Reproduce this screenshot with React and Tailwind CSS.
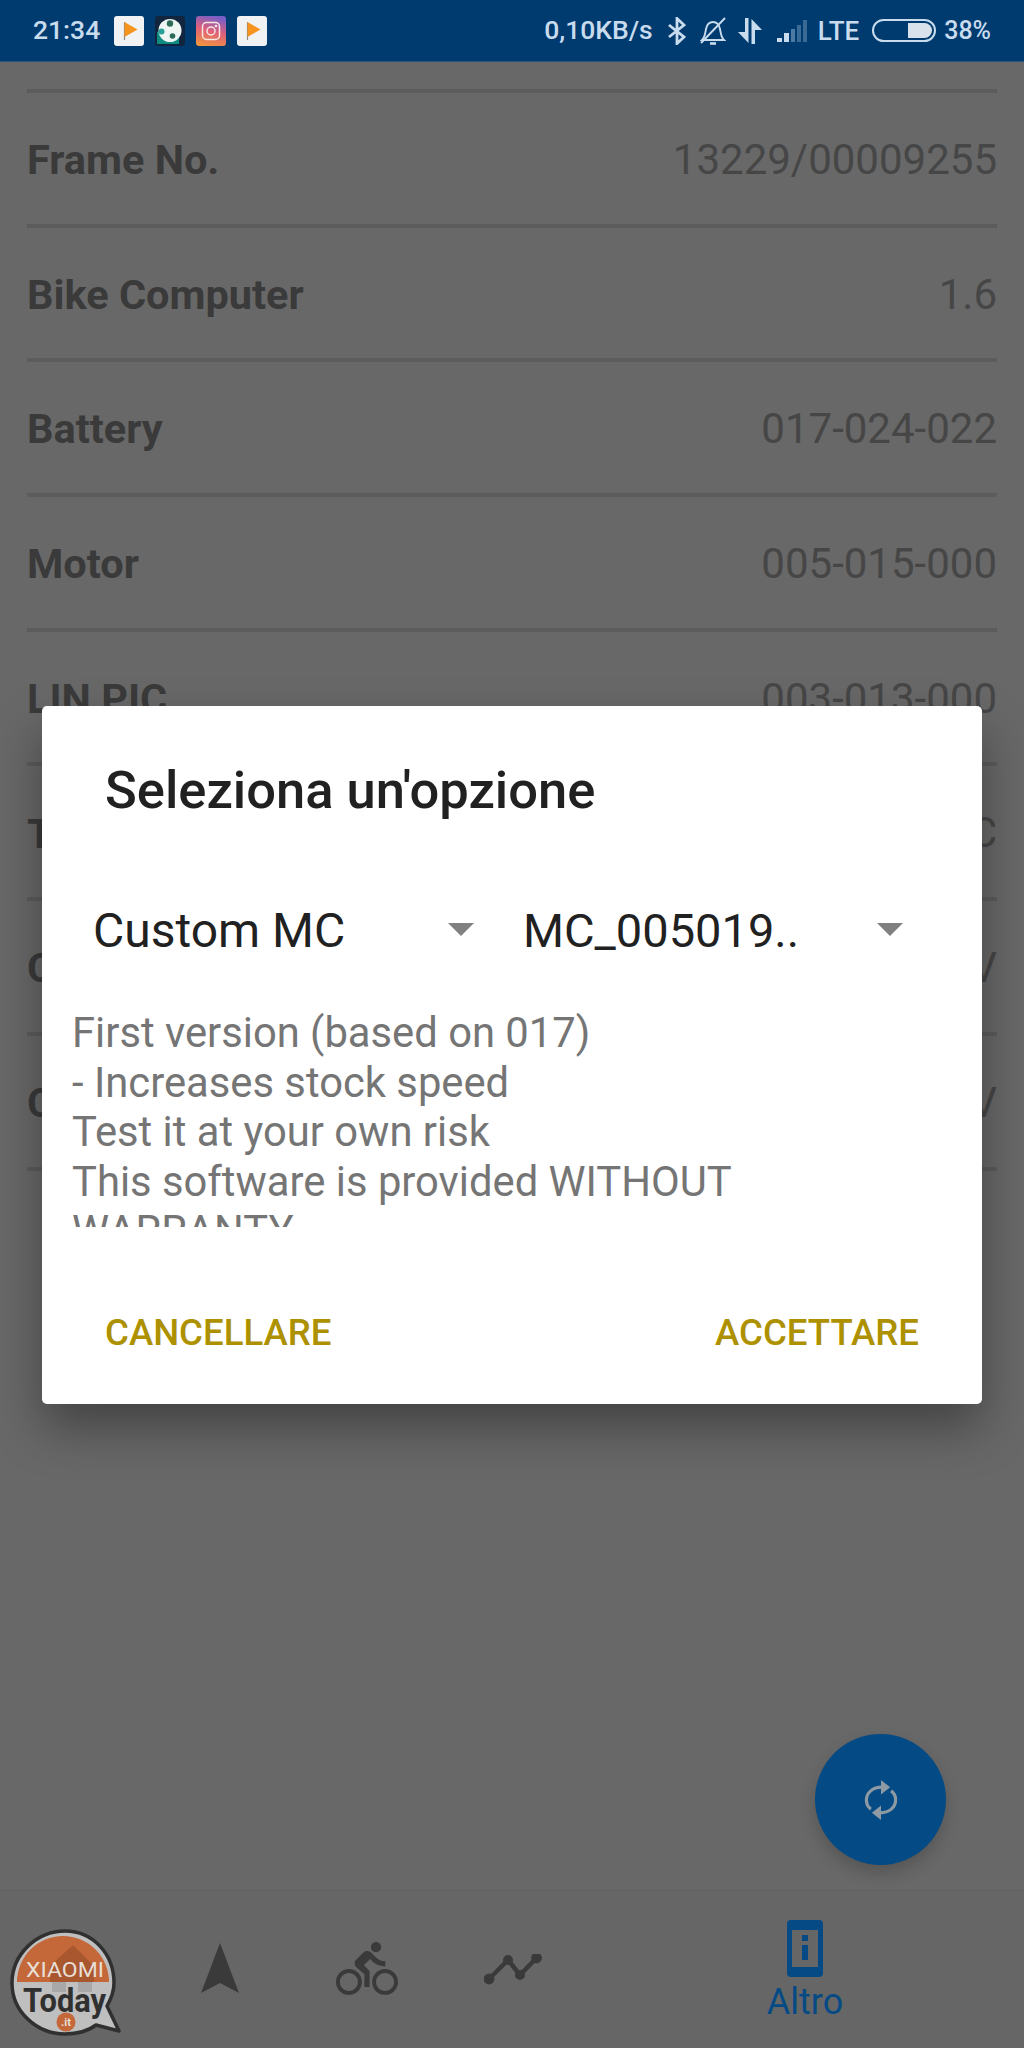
import React from "react";

const rows = [
  ["Frame No.", "13229/00009255"],
  ["Bike Computer", "1.6"],
  ["Battery", "017-024-022"],
  ["Motor", "005-015-000"],
  ["LIN PIC", "003-013-000"],
  ["Tipo", "MC"],
  ["Charger", "36V"],
  ["Cell", "36V"],
];

function Flag() {
  return (
    <div className="w-[30px] h-[30px] rounded-[3px] bg-[#f1f2f4]">
      <svg width="30" height="30" viewBox="0 0 30 30">
        <path d="M10.5 6v18" stroke="#8a8a80" strokeWidth="1.2" />
        <path d="M10.5 6l13 7.5-13 7.5z" fill="#f7941e" />
      </svg>
    </div>
  );
}

function Soccer() {
  return (
    <svg width="30" height="30" viewBox="0 0 30 30">
      <rect width="30" height="30" rx="3" fill="#12253f" />
      <rect x="2" y="16" width="22" height="12" fill="#0f8a80" />
      <circle cx="15" cy="14.5" r="11.5" fill="#eef5f2" />
      <circle cx="15" cy="7.5" r="3.2" fill="#2c6b5a" />
      <circle cx="6.5" cy="15.5" r="3" fill="#2aa198" />
      <circle cx="17.5" cy="20" r="2.8" fill="#2c6b5a" />
    </svg>
  );
}

function Instagram() {
  return (
    <div className="w-[30px] h-[30px] rounded-[3px] bg-[linear-gradient(15deg,#f29a36_0%,#e0607a_50%,#7a5fc6_90%)] flex items-center justify-center">
      <svg width="20" height="20" viewBox="0 0 20 20" fill="none" stroke="#f6e8e4" strokeWidth="1.5">
        <rect x="1.5" y="1.5" width="17" height="17" rx="4" />
        <circle cx="10" cy="10" r="4" />
        <circle cx="15" cy="5" r="0.6" fill="#f6e8e4" />
      </svg>
    </div>
  );
}

function StatusRight() {
  const c = "#c9dcee";
  return (
    <div className="flex items-center text-[#c9dcee] font-medium leading-none">
      <span className="text-[26.5px]">0,10KB/s</span>
      <svg className="ml-[15px]" width="18" height="28" viewBox="0 0 18 28" fill="none" stroke={c} strokeWidth="2.8">
        <path d="M1 8l15 12-7 6.5V1.5l7 6.5L1 20" />
      </svg>
      <svg className="ml-[14px]" width="26" height="28" viewBox="0 0 26 28" fill="none" stroke={c} strokeWidth="1.9">
        <path d="M2 23c3-2.500 3-6 4-11 1-5 3-7 7-7 4 0 6 2 7 7 1 5 1 8.500 4 11z" />
        <path d="M10 26.500h6" strokeWidth="2.6" />
        <path d="M1 26L25 1" />
      </svg>
      <svg className="ml-[12px]" width="24" height="26" viewBox="0 0 24 26" fill={c}>
        <path d="M7 0h3.500v25L0 14h7z" />
        <path d="M13.500 26V1L24 12h-7v14z" />
      </svg>
      <svg className="ml-[14px]" width="32" height="22" viewBox="0 0 32 22">
        <rect x="1" y="18" width="5" height="4" fill={c} />
        <rect x="8" y="13" width="5" height="9" fill={c} />
        <rect x="15" y="9" width="4" height="13" fill="#4c7aa3" />
        <rect x="21" y="5" width="4" height="17" fill="#3a6b96" />
        <rect x="27" y="0" width="4" height="22" fill="#3a6b96" />
      </svg>
      <span className="ml-[10px] text-[26px]">LTE</span>
      <div className="ml-[13px] w-[64px] h-[23px] rounded-full border-2 border-[#c9dcee] p-[2px] flex justify-end">
        <div className="w-[24px] h-full bg-[#d9e2ea] rounded-r-full" />
      </div>
      <span className="ml-[8px] text-[25px]">38%</span>
    </div>
  );
}

function NavIcons() {
  const c = "#3a3a3a";
  return (
    <>
      <svg className="ml-[201px] mt-[52px] shrink-0" width="38" height="50" viewBox="0 0 38 50">
        <path d="M19 0L38 50 19 40 0 50z" fill={c} />
      </svg>
      <svg className="ml-[97px] mt-[47px] shrink-0" width="62" height="62" viewBox="0 0 24 24" fill={c}>
        <path d="M15.5 5.500c1.100 0 2-.9 2-2s-.9-2-2-2-2 .9-2 2 .9 2 2 2zM5 12c-2.800 0-5 2.200-5 5s2.200 5 5 5 5-2.200 5-5-2.200-5-5-5zm0 8.500c-1.900 0-3.500-1.600-3.500-3.500s1.600-3.500 3.500-3.500 3.500 1.600 3.500 3.500-1.600 3.500-3.500 3.500zm5.800-10l2.400-2.400.8.800c1.300 1.300 3 2.100 5.100 2.100V9c-1.500 0-2.700-.6-3.600-1.500l-1.900-1.900c-.5-.4-1-.6-1.600-.6s-1.100.2-1.400.6L7.800 8.400c-.4.400-.6.900-.6 1.400 0 .6.200 1.100.6 1.400L11 14v5h2v-6.200l-2.200-2.300zM19 12c-2.800 0-5 2.200-5 5s2.200 5 5 5 5-2.200 5-5-2.200-5-5-5zm0 8.500c-1.900 0-3.500-1.600-3.500-3.500s1.600-3.500 3.500-3.500 3.500 1.600 3.500 3.500-1.600 3.500-3.500 3.500z" />
      </svg>
      <svg className="ml-[86px] mt-[63px] shrink-0" width="58" height="32" viewBox="0 0 58 32" fill="none" stroke={c} strokeWidth="4.500" strokeLinejoin="round">
        <path d="M5 25L24 6 36 21 52.500 4" />
        <circle cx="5" cy="25" r="3.200" fill={c} />
        <circle cx="24" cy="6" r="2.800" fill={c} />
        <circle cx="36" cy="21" r="2.800" fill={c} />
        <circle cx="52.500" cy="4" r="3.200" fill={c} />
      </svg>
    </>
  );
}

function Logo() {
  return (
    <svg className="absolute left-0 top-[1925px]" width="130" height="118" viewBox="0 0 130 118">
      <defs>
        <clipPath id="logotop"><rect x="0" y="0" width="130" height="57" /></clipPath>
      </defs>
      <path d="M65 6C37 6 12 29 12 58s25 51 53 51c14 0 23-3 31-9l23 6-12-25c4-7 7-14 7-23C114 29 93 6 65 6z" fill="#bfbfbf" stroke="#303030" strokeWidth="3.500" strokeLinejoin="round" />
      <circle cx="63" cy="57" r="46" fill="#c4683a" clipPath="url(#logotop)" />
      <path d="M73 20L50 41v16h44V41z" fill="#a9572f" />
      <rect x="52" y="57" width="14" height="10" fill="#a8a8a8" />
      <rect x="78" y="57" width="14" height="10" fill="#a8a8a8" />
      <text x="65" y="52" textAnchor="middle" fontFamily="Roboto, sans-serif" fontSize="21" fill="#e8dfd6" textLength="78" lengthAdjust="spacingAndGlyphs">XIAOMI</text>
      <text x="64.5" y="87" textAnchor="middle" fontFamily="Roboto, sans-serif" fontWeight="700" fontSize="33" fill="#303030" textLength="83" lengthAdjust="spacingAndGlyphs">Today</text>
      <circle cx="66" cy="97" r="9.500" fill="#c4683a" />
      <text x="66" y="101" textAnchor="middle" fontFamily="Roboto, sans-serif" fontWeight="700" fontSize="11" fill="#e8dfd6">.it</text>
    </svg>
  );
}

export default function App() {
  return (
    <div className="relative w-[1024px] h-[2048px] overflow-hidden bg-[#686868] flex flex-col font-['Roboto',sans-serif]">
      <div className="h-[62px] shrink-0 bg-[#003b70] border-b border-[#2a5580] pl-[33px] pr-[33px] flex items-center justify-between">
        <div className="flex items-center gap-[11px]">
          <span className="text-[#c9dcee] text-[26.5px] font-medium leading-none mr-[3px]">21:34</span>
          <Flag />
          <Soccer />
          <Instagram />
          <Flag />
        </div>
        <StatusRight />
      </div>

      <div className="flex-1 px-[27px] pt-[27px]">
        <div className="h-[4px] bg-[#5c5c5c]" />
        {rows.map(([k, v]) => (
          <div key={k} className="h-[134.7px] flex flex-col">
            <div className="flex-1 flex items-center justify-between text-[42px] leading-none pt-[3px]">
              <span className="font-bold text-[#3a3a3a] text-[41.5px]">{k}</span>
              <span className="text-[#464646]">{v}</span>
            </div>
            <div className="h-[4px] bg-[#5c5c5c]" />
          </div>
        ))}
      </div>

      <div className="h-[158px] shrink-0 bg-[#666666] border-t border-[#616161] flex relative">
        <NavIcons />
        <div className="absolute left-[765px] top-[29px] flex flex-col items-center w-[80px]">
          <svg width="36" height="57" viewBox="0 0 36 57">
            <rect x="0" y="0" width="36" height="57" rx="4" fill="#054a85" />
            <rect x="5" y="10" width="26" height="37" fill="#666666" />
            <rect x="15" y="15" width="6" height="6" fill="#054a85" />
            <rect x="15" y="25" width="6" height="15" fill="#054a85" />
          </svg>
          <span className="text-[36px] leading-none mt-[7px] text-[#054a85]">Altro</span>
        </div>
      </div>

      <div className="absolute left-[815px] top-[1734px] w-[131px] h-[131px] rounded-full bg-[#044a84] shadow-[0_8px_16px_rgba(0,0,0,0.18)] flex items-center justify-center">
        <svg width="34" height="42" viewBox="0 0 36 46" fill="none" stroke="#8d99a3" strokeWidth="3.500">
          <path d="M19 9C9 9 2 15 2 23c0 4 2 8 5 10" />
          <path d="M17 37c10 0 17-6 17-14 0-4-2-8-5-10" />
          <path d="M18 1l10 8-10 8z" fill="#8d99a3" stroke="none" />
          <path d="M18 29L8 37l10 8z" fill="#8d99a3" stroke="none" />
        </svg>
      </div>

      <Logo />

      <div className="absolute left-[42px] top-[706px] w-[940px] h-[698px] bg-white rounded-[5px] shadow-[0_24px_48px_rgba(0,0,0,0.35)] flex flex-col">
        <div className="pl-[63px] pt-[51px] text-[52.5px] leading-[66px] font-medium text-[#212121]">Seleziona un'opzione</div>
        <div className="mt-[78px] flex items-center text-[#212121] text-[48px] leading-[60px]">
          <div className="relative w-[430px] pl-[51px]">
            Custom MC
            <div className="absolute left-[406px] top-[22px] w-0 h-0 border-l-[13px] border-r-[13px] border-t-[13px] border-l-transparent border-r-transparent border-t-[#808080]" />
          </div>
          <div className="relative w-[430px] pl-[51px] text-[47px]">
            MC_005019..
            <div className="absolute left-[405px] top-[22px] w-0 h-0 border-l-[13px] border-r-[13px] border-t-[13px] border-l-transparent border-r-transparent border-t-[#808080]" />
          </div>
        </div>
        <div className="mx-[30px] mt-[47px] h-[219px] overflow-hidden text-[41.75px] leading-[49.5px] text-[#757575]">
          <div>First version (based on 017)</div>
          <div>- Increases stock speed</div>
          <div>Test it at your own risk</div>
          <div>This software is provided WITHOUT</div>
          <div>WARRANTY</div>
        </div>
        <div className="mt-[88px] px-[63px] flex justify-between text-[36.6px] leading-none font-medium text-[#ad9100]">
          <span>CANCELLARE</span>
          <span>ACCETTARE</span>
        </div>
      </div>
    </div>
  );
}
